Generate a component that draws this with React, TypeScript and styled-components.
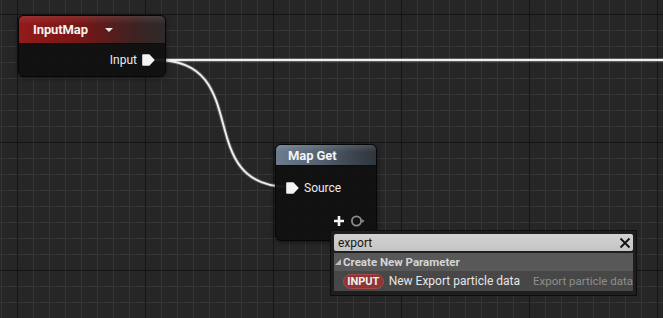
import React from 'react';
import styled, { createGlobalStyle } from 'styled-components';

const Global = createGlobalStyle`
  html, body { margin: 0; padding: 0; background: #262626; }
  body { font-family: Roboto, "Noto Sans", sans-serif; }
  #root { width: 663px; height: 318px; overflow: hidden; }
`;

const Canvas = styled.div`
  position: relative;
  width: 663px;
  height: 318px;
  overflow: hidden;
  background-color: #262626;
  background-image:
    linear-gradient(to right, #151515 1px, transparent 1px),
    linear-gradient(to bottom, #151515 1px, transparent 1px),
    linear-gradient(to right, #353535 1px, transparent 1px),
    linear-gradient(to bottom, #353535 1px, transparent 1px);
  background-size: 128px 128px, 128px 128px, 16px 16px, 16px 16px;
  background-position: 17px 0, 0 14px, 1px 0, 0 14px;
`;

const Wires = styled.svg`
  position: absolute;
  left: 0;
  top: 0;
  pointer-events: none;
`;

const Node = styled.div<{ $x: number; $y: number; $w: number; $h: number }>`
  position: absolute;
  left: ${(p) => p.$x}px;
  top: ${(p) => p.$y}px;
  width: ${(p) => p.$w}px;
  height: ${(p) => p.$h}px;
  box-sizing: border-box;
  display: flex;
  flex-direction: column;
  background: rgba(16, 16, 16, 0.94);
  border: 1px solid #070707;
  border-radius: 6px;
  overflow: hidden;
  box-shadow: 0 1px 4px rgba(0, 0, 0, 0.55);
`;

const Header = styled.div<{ $kind: 'red' | 'steel'; $h: number; $pad: number }>`
  height: ${(p) => p.$h}px;
  flex: none;
  display: flex;
  align-items: center;
  padding-left: ${(p) => p.$pad}px;
  box-sizing: border-box;
  background: ${(p) =>
    p.$kind === 'red'
      ? 'linear-gradient(to bottom, rgba(255,255,255,0.10), rgba(255,255,255,0) 30%), linear-gradient(to right, #931a1a 0%, #7a1616 40%, #3d2222 80%, #2e2a2a 100%)'
      : 'linear-gradient(to bottom, rgba(255,255,255,0.12), rgba(255,255,255,0) 35%), linear-gradient(to right, #6c7c8d 0%, #566472 40%, #3a424c 80%, #30353b 100%)'};
  border-bottom: 1px solid #0c0c0c;
`;

const Title = styled.span`
  font-family: Roboto, sans-serif;
  font-weight: 700;
  font-size: 13px;
  color: #f2f2f2;
  letter-spacing: -0.1px;
`;

const Caret = styled.span`
  margin-left: 17px;
  width: 0;
  height: 0;
  border-left: 4px solid transparent;
  border-right: 4px solid transparent;
  border-top: 4px solid #e8e8e8;
  margin-top: 1px;
`;

const Body = styled.div<{ $pt: number }>`
  flex: 1;
  display: flex;
  flex-direction: column;
  padding-top: ${(p) => p.$pt}px;
  gap: 17px;
`;

const PinRow = styled.div<{ $side: 'left' | 'right'; $pad: number; $gap: number }>`
  height: 16px;
  display: flex;
  align-items: center;
  justify-content: ${(p) => (p.$side === 'left' ? 'flex-start' : 'flex-end')};
  padding-left: ${(p) => (p.$side === 'left' ? p.$pad : 0)}px;
  padding-right: ${(p) => (p.$side === 'right' ? p.$pad : 0)}px;
  gap: ${(p) => p.$gap}px;
`;

const PinLabel = styled.span`
  font-family: Roboto, sans-serif;
  font-size: 12px;
  color: #ececec;
`;

const Popup = styled.div`
  position: absolute;
  left: 330px;
  top: 230px;
  width: 307px;
  height: 66px;
  box-sizing: border-box;
  padding: 3px;
  background: #1e1e1e;
  border: 1px solid #0d0d0d;
  display: flex;
  flex-direction: column;
  gap: 2px;
`;

const SearchBox = styled.div`
  height: 17px;
  display: flex;
  align-items: center;
  justify-content: space-between;
  padding: 0 2px 0 4px;
  background: linear-gradient(to bottom, #d2d2d2, #c4c4c4);
  border-radius: 2px;
  font-family: Roboto, sans-serif;
  font-size: 12px;
  color: #151515;
`;

const List = styled.div`
  display: flex;
  flex-direction: column;
  overflow: hidden;
`;

const Category = styled.div`
  height: 18px;
  display: flex;
  align-items: center;
  gap: 2px;
  padding-left: 1px;
  background: #585858;
  font-family: Roboto, sans-serif;
  font-weight: 700;
  font-size: 11.5px;
  color: #d6d6d6;
`;

const Item = styled.div`
  height: 20px;
  display: flex;
  align-items: center;
  padding-left: 9px;
  background: #474747;
  white-space: nowrap;
  font-family: Roboto, sans-serif;
  font-size: 12px;
`;

const Badge = styled.span`
  height: 15px;
  width: 43px;
  box-sizing: border-box;
  display: inline-flex;
  align-items: center;
  justify-content: center;
  border-radius: 8px;
  background: #8f3535;
  border: 1px solid #a54848;
  color: #f0f0f0;
  font-weight: 700;
  font-size: 11px;
  margin-right: 5px;
`;

const ItemText = styled.span<{ $dim?: boolean }>`
  color: ${(p) => (p.$dim ? '#8e8e8e' : '#e6e6e6')};
  margin-right: ${(p) => (p.$dim ? 0 : 13)}px;
  font-size: ${(p) => (p.$dim ? 11.5 : 12)}px;
`;

const DataPin = () => (
  <svg width="13" height="12" viewBox="0 0 13 12">
    <path
      d="M1 1 H7 L11.8 6 L7 11 H1 Z"
      fill="#f4f4f4"
      stroke="#f4f4f4"
      strokeWidth="1.6"
      strokeLinejoin="round"
    />
  </svg>
);

const PlusIcon = () => (
  <svg width="10" height="10" viewBox="0 0 10 10">
    <path d="M5 0 V10 M0 5 H10" stroke="#f4f4f4" strokeWidth="2.6" />
  </svg>
);

const RingPin = () => (
  <svg width="14" height="12" viewBox="0 0 14 12">
    <circle cx="5.5" cy="6" r="4.6" fill="none" stroke="#8c8c8c" strokeWidth="1.8" />
    <path d="M11.2 4 L13.5 6 L11.2 8 Z" fill="#8c8c8c" />
  </svg>
);

const CloseIcon = () => (
  <svg width="12" height="12" viewBox="0 0 12 12">
    <path d="M1.5 1.5 L10.5 10.5 M10.5 1.5 L1.5 10.5" stroke="#111" strokeWidth="1.8" />
  </svg>
);

const Collapse = () => (
  <svg width="6" height="6" viewBox="0 0 6 6">
    <path d="M6 0 V6 H0 Z" fill="#bdbdbd" />
  </svg>
);

export default function App() {
  return (
    <>
      <Global />
      <Canvas>
        <Wires width={663} height={318} viewBox="0 0 663 318">
          <path d="M154 60 H663" stroke="rgba(255,255,255,0.25)" strokeWidth="4" fill="none" />
          <path d="M154 60 H663" stroke="#efefef" strokeWidth="2" fill="none" />
          <path
            d="M156 60 C256 60, 190 187, 290 187"
            stroke="rgba(255,255,255,0.2)"
            strokeWidth="4"
            fill="none"
          />
          <path d="M156 60 C256 60, 190 187, 290 187" stroke="#ededed" strokeWidth="2" fill="none" />
        </Wires>

        <Node $x={18} $y={15} $w={148} $h={62}>
          <Header $kind="red" $h={28} $pad={14}>
            <Title>InputMap</Title>
            <Caret />
          </Header>
          <Body $pt={8}>
            <PinRow $side="right" $pad={10} $gap={5}>
              <PinLabel>Input</PinLabel>
              <DataPin />
            </PinRow>
          </Body>
        </Node>

        <Node $x={275} $y={144} $w={102} $h={97}>
          <Header $kind="steel" $h={21} $pad={12}>
            <Title>Map Get</Title>
          </Header>
          <Body $pt={14}>
            <PinRow $side="left" $pad={10} $gap={5}>
              <DataPin />
              <PinLabel>Source</PinLabel>
            </PinRow>
            <PinRow $side="right" $pad={11} $gap={7}>
              <PlusIcon />
              <RingPin />
            </PinRow>
          </Body>
        </Node>

        <Popup>
          <SearchBox>
            <span>export</span>
            <CloseIcon />
          </SearchBox>
          <List>
            <Category>
              <Collapse />
              <span>Create New Parameter</span>
            </Category>
            <Item>
              <Badge>INPUT</Badge>
              <ItemText>New Export particle data</ItemText>
              <ItemText $dim>Export particle data</ItemText>
            </Item>
          </List>
        </Popup>
      </Canvas>
    </>
  );
}
